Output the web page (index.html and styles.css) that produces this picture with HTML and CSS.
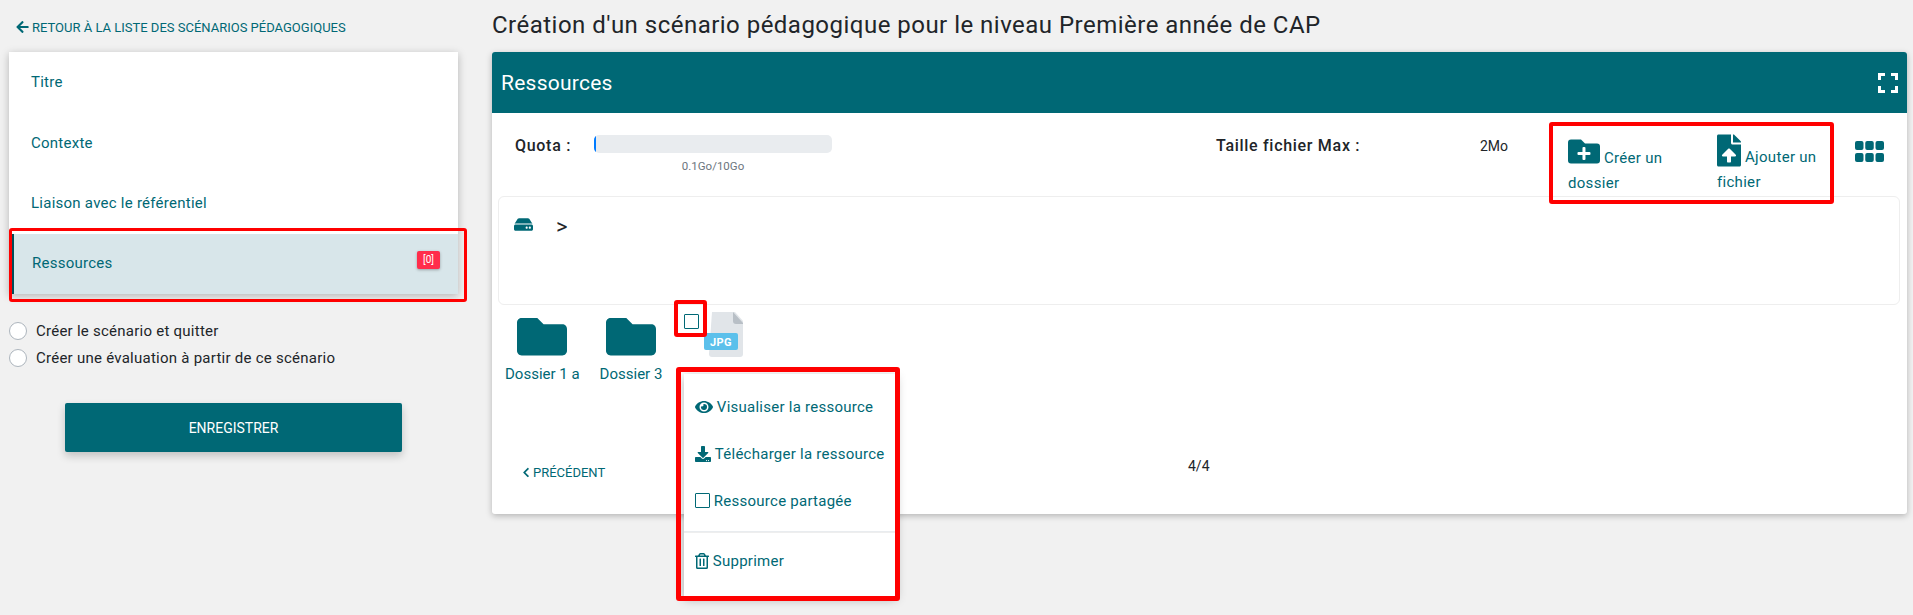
FILE: index.html
```html
<!DOCTYPE html>
<html lang="fr">
<head>
    <meta charset="UTF-8" />
    <title>Création d'un scénario pédagogique</title>
    <link rel="stylesheet" href="styles.css">
</head>
<body>
    <div class="page">
        <aside class="side">
            <a class="back">
                <svg class="ic-back" viewBox="0 0 448 512"><path d="M257.5 445.1l-22.2 22.2c-9.4 9.4-24.6 9.4-33.9 0L7 273c-9.4-9.4-9.4-24.6 0-33.9L201.4 44.7c9.4-9.4 24.6-9.4 33.9 0l22.2 22.2c9.5 9.5 9.3 25-.4 34.3L136.6 216H424c13.3 0 24 10.7 24 24v32c0 13.3-10.7 24-24 24H136.6l120.5 114.8c9.8 9.3 10 24.8.4 34.3z"/></svg>
                RETOUR À LA LISTE DES SCÉNARIOS PÉDAGOGIQUES
            </a>
            <ul class="steps">
                <li>Titre</li>
                <li>Contexte</li>
                <li>Liaison avec le référentiel</li>
                <li class="active">Ressources <span class="badge">[0]</span></li>
            </ul>
            <div class="radios">
                <label><span class="radio"></span>Créer le scénario et quitter</label>
                <label><span class="radio"></span>Créer une évaluation à partir de ce scénario</label>
            </div>
            <button class="save">ENREGISTRER</button>
        </aside>

        <main class="main">
            <h1>Création d'un scénario pédagogique pour le niveau Première année de CAP</h1>
            <section class="panel">
                <header class="panel-head">
                    <h2>Ressources</h2>
                    <svg class="ic-full" viewBox="0 0 20 20"><path d="M1.5 7V1.5H7M13 1.5h5.500V7M18.500 13v5.500H13M7 18.500H1.500V13"/></svg>
                </header>
                <div class="tools">
                    <b class="quota-label">Quota :</b>
                    <div class="quota">
                        <div class="bar"><div class="bar-fill"></div></div>
                        <small>0.1Go/10Go</small>
                    </div>
                    <b class="max-label">Taille fichier Max :</b>
                    <span class="max-val">2Mo</span>
                    <a class="action act-folder">
                        <svg class="ic-addfolder" viewBox="0 64 512 384"><path d="M464,128H272L208,64H48A48,48,0,0,0,0,112V400a48,48,0,0,0,48,48H464a48,48,0,0,0,48-48V176A48,48,0,0,0,464,128ZM359.500,296a16,16,0,0,1-16,16h-64v64a16,16,0,0,1-16,16h-16a16,16,0,0,1-16-16V312h-64a16,16,0,0,1-16-16V280a16,16,0,0,1,16-16h64V200a16,16,0,0,1,16-16h16a16,16,0,0,1,16,16v64h64a16,16,0,0,1,16,16Z"/></svg>
                        Créer un dossier
                    </a>
                    <a class="action act-file">
                        <svg class="ic-addfile" viewBox="0 0 384 512"><path d="M224 136V0H24C10.700 0 0 10.700 0 24v464c0 13.300 10.700 24 24 24h336c13.300 0 24-10.700 24-24V160H248c-13.200 0-24-10.800-24-24zm65.180 216.010H224v80c0 8.840-7.160 16-16 16h-32c-8.840 0-16-7.160-16-16v-80H94.820c-14.280 0-21.410-17.290-11.270-27.360l96.420-95.700c6.650-6.610 17.390-6.610 24.040 0l96.420 95.700c10.150 10.070 3.030 27.360-11.250 27.360zM377 105L279.100 7c-4.500-4.500-10.600-7-17-7H256v128h128v-6.100c0-6.300-2.500-12.400-7-16.900z"/></svg>
                        Ajouter un fichier
                    </a>
                    <svg class="ic-grid" viewBox="0 0 29 21">
                        <rect width="8.500" height="9" rx="2"/><rect x="10.250" width="8.500" height="9" rx="2"/><rect x="20.500" width="8.500" height="9" rx="2"/>
                        <rect y="12" width="8.500" height="9" rx="2"/><rect x="10.250" y="12" width="8.500" height="9" rx="2"/><rect x="20.500" y="12" width="8.500" height="9" rx="2"/>
                    </svg>
                </div>
                <div class="crumbs">
                    <svg class="ic-hdd" viewBox="0 64 576 384"><path d="M576 304v96c0 26.510-21.490 48-48 48H48c-26.510 0-48-21.490-48-48v-96c0-26.510 21.490-48 48-48h480c26.510 0 48 21.490 48 48zm-48-80a79.557 79.557 0 0 1 30.777 6.165L462.250 85.374A48.003 48.003 0 0 0 422.311 64H153.689a48 48 0 0 0-39.938 21.374L17.223 230.165A79.557 79.557 0 0 1 48 224h480zm-48 96c-17.673 0-32 14.327-32 32s14.327 32 32 32 32-14.327 32-32-14.327-32-32-32zm-96 0c-17.673 0-32 14.327-32 32s14.327 32 32 32 32-14.327 32-32-14.327-32-32-32z"/></svg>
                    <span class="sep">&gt;</span>
                </div>
                <div class="files">
                    <div class="folder">
                        <svg viewBox="0 64 512 384"><path d="M464 128H272l-64-64H48C21.490 64 0 85.490 0 112v288c0 26.510 21.490 48 48 48h416c26.510 0 48-21.490 48-48V176c0-26.510-21.490-48-48-48z"/></svg>
                        <span>Dossier 1 a</span>
                    </div>
                    <div class="folder">
                        <svg viewBox="0 64 512 384"><path d="M464 128H272l-64-64H48C21.490 64 0 85.490 0 112v288c0 26.510 21.490 48 48 48h416c26.510 0 48-21.490 48-48V176c0-26.510-21.490-48-48-48z"/></svg>
                        <span>Dossier 3</span>
                    </div>
                    <div class="file">
                        <span class="check"></span>
                        <svg class="ic-jpg" viewBox="0 0 39 45">
                            <path class="jpg-page" d="M8 0h23l8 9v33a3 3 0 0 1-3 3H8a3 3 0 0 1-3-3z"/>
                            <path class="jpg-fold" d="M29 0l10 11v1h-7a3 3 0 0 1-3-3z"/>
                            <rect class="jpg-tag" y="21" width="34" height="17" rx="2"/>
                            <text class="jpg-text" x="17" y="34" text-anchor="middle">JPG</text>
                        </svg>
                        <ul class="menu">
                            <li>
                                <svg class="ic-eye" viewBox="0 64 576 384"><path d="M572.520 241.400C518.290 135.590 410.930 64 288 64S57.680 135.640 3.480 241.410a32.350 32.350 0 0 0 0 29.190C57.710 376.410 165.070 448 288 448s230.320-71.640 284.520-177.410a32.350 32.350 0 0 0 0-29.190zM288 400a144 144 0 1 1 144-144 143.930 143.930 0 0 1-144 144zm0-240a95.310 95.310 0 0 0-25.310 3.790 47.850 47.850 0 0 1-66.900 66.900A95.780 95.780 0 1 0 288 160z"/></svg>
                                Visualiser la ressource
                            </li>
                            <li>
                                <svg class="ic-down" viewBox="0 0 512 512"><path d="M216 0h80c13.300 0 24 10.700 24 24v168h87.700c17.800 0 26.700 21.500 14.100 34.100L269.700 378.300c-7.500 7.500-19.800 7.500-27.300 0L90.100 226.100c-12.600-12.600-3.700-34.100 14.100-34.100H192V24c0-13.300 10.700-24 24-24zm296 376v112c0 13.300-10.700 24-24 24H24c-13.300 0-24-10.700-24-24V376c0-13.300 10.700-24 24-24h146.700l49 49c20.100 20.100 52.500 20.100 72.600 0l49-49H488c13.300 0 24 10.700 24 24zm-124 88c0-11-9-20-20-20s-20 9-20 20 9 20 20 20 20-9 20-20zm64 0c0-11-9-20-20-20s-20 9-20 20 9 20 20 20 20-9 20-20z"/></svg>
                                Télécharger la ressource
                            </li>
                            <li><span class="share-box"></span>Ressource partagée</li>
                            <li class="divider"></li>
                            <li>
                                <svg class="ic-trash" viewBox="0 0 448 512"><path d="M268 416h24a12 12 0 0 0 12-12V188a12 12 0 0 0-12-12h-24a12 12 0 0 0-12 12v216a12 12 0 0 0 12 12zM432 80h-82.410l-34-56.700A48 48 0 0 0 274.410 0H173.590a48 48 0 0 0-41.160 23.300L98.410 80H16A16 16 0 0 0 0 96v16a16 16 0 0 0 16 16h16v336a48 48 0 0 0 48 48h288a48 48 0 0 0 48-48V128h16a16 16 0 0 0 16-16V96a16 16 0 0 0-16-16zM171.840 50.910A6 6 0 0 1 177 48h94a6 6 0 0 1 5.150 2.910L293.610 80H154.390zM368 464H80V128h288zm-212-48h24a12 12 0 0 0 12-12V188a12 12 0 0 0-12-12h-24a12 12 0 0 0-12 12v216a12 12 0 0 0 12 12z"/></svg>
                                Supprimer
                            </li>
                        </ul>
                    </div>
                </div>
                <div class="pager">
                    <a class="prev">
                        <svg class="ic-prev" viewBox="0 0 320 512"><path d="M34.520 239.030L228.870 44.690c9.370-9.370 24.570-9.370 33.940 0l22.670 22.670c9.360 9.360 9.370 24.520.04 33.900L131.490 256l154.020 154.750c9.340 9.380 9.320 24.540-.04 33.900l-22.670 22.670c-9.370 9.370-24.570 9.370-33.940 0L34.520 272.970c-9.370-9.370-9.370-24.570 0-33.940z"/></svg>
                        PRÉCÉDENT
                    </a>
                    <span class="count">4/4</span>
                </div>
            </section>
        </main>
    </div>

    <!-- cadres rouges -->
    <div class="mark mark-step"></div>
    <div class="mark mark-actions"></div>
    <div class="mark mark-check"></div>
    <div class="mark mark-menu"></div>
</body>
</html>
```

FILE: styles.css
```css
* {
    margin: 0;
    padding: 0;
    box-sizing: border-box;
    list-style: none;
}
html, body {
    height: 615px;
    overflow: hidden;
}
body {
    background: #f1f1f1;
    color: #212529;
    font-family: Roboto, "Liberation Sans", sans-serif;
    font-size: 15px;
    letter-spacing: .25px;
    position: relative;
}
svg {
    fill: #006875;
}
.page {
    display: flex;
}

/* colonne gauche */
.side {
    width: 492px;
    flex: none;
    padding: 17px 0 0 9px;
}
.back {
    display: flex;
    align-items: center;
    gap: 3px;
    height: 20px;
    padding-left: 7px;
    color: #006875;
    font-size: 13px;
    letter-spacing: 0;
}
.ic-back {
    width: 13px;
    height: 14px;
}
.steps {
    width: 449px;
    margin-top: 15px;
    background: #fff;
    box-shadow: 0 2px 8px rgba(0, 0, 0, .25);
    color: #006875;
}
.steps li {
    height: 61px;
    display: flex;
    align-items: center;
    justify-content: space-between;
    padding: 0 18px 2px 22px;
}
.steps li:nth-child(3) {
    padding-bottom: 4px;
}
.steps .active {
    height: 60px;
    margin-top: -1px;
    padding-left: 18px;
    background: #d8e6ea;
    border-left: 5px solid #004f5a;
}
.badge {
    margin-top: -6px;
    padding: 1px 6px;
    height: 18px;
    background: #ff2d4b;
    border-radius: 2px;
    box-shadow: 0 1px 3px rgba(0, 0, 0, .3);
    color: #fff;
    font-size: 10px;
    line-height: 16px;
    letter-spacing: 0;
}
.radios {
    margin-top: 23px;
}
.radios label {
    display: flex;
    align-items: center;
    gap: 9px;
    height: 27px;
}
.radio {
    width: 18px;
    height: 18px;
    background: #fff;
    border: 1px solid #adb5bd;
    border-radius: 50%;
}
.save {
    display: block;
    width: 337px;
    height: 49px;
    margin: 32px 0 0 56px;
    background: #006875;
    border: 0;
    border-radius: 2px;
    box-shadow: 0 4px 8px rgba(0, 0, 0, .2);
    color: #fff;
    font: 14px Roboto, sans-serif;
}

/* colonne principale */
.main {
    width: 1415px;
    flex: none;
}
h1 {
    height: 52px;
    padding-top: 8px;
    font-size: 24px;
    font-weight: 400;
    line-height: 34px;
    letter-spacing: .48px;
}
.panel {
    height: 462px;
    background: #fff;
    border-radius: 3px;
    box-shadow: 0 2px 6px rgba(0, 0, 0, .25);
}
.panel-head {
    height: 61px;
    display: flex;
    align-items: center;
    justify-content: space-between;
    padding: 0 9px 0 9px;
    background: #006875;
    border-radius: 3px 3px 0 0;
}
h2 {
    color: #fff;
    font-size: 21px;
    font-weight: 400;
}
.ic-full {
    width: 20px;
    height: 20px;
    fill: none;
    stroke: #fff;
    stroke-width: 3;
}

.tools {
    height: 83px;
    display: flex;
    align-items: flex-start;
    padding-left: 23px;
}
.quota-label {
    width: 79px;
    margin-top: 23px;
    font-size: 16px;
    font-weight: 500;
    letter-spacing: .7px;
}
.quota {
    width: 238px;
    margin-top: 22px;
    text-align: center;
}
.bar {
    height: 18px;
    background: #e9ecef;
    border-radius: 5px;
    overflow: hidden;
}
.bar-fill {
    width: 2px;
    height: 100%;
    background: #007bff;
}
.quota small {
    display: block;
    margin-top: 6px;
    color: #6c757d;
    font-size: 11.500px;
    letter-spacing: 0;
}
.max-label {
    width: 264px;
    margin: 23px 0 0 384px;
    font-size: 16px;
    font-weight: 500;
    letter-spacing: .7px;
}
.max-val {
    width: 88px;
    margin-top: 25px;
    font-size: 14px;
    letter-spacing: 0;
}
.action {
    color: #006875;
    line-height: 25px;
    font-size: 15px;
    display: block;
    letter-spacing: .3px;
}
.act-folder {
    width: 149px;
    padding: 26px 30px 0 0;
}
.act-file {
    width: 138px;
    padding: 21px 28px 0 0;
}
.ic-addfolder {
    width: 32px;
    height: 25px;
    vertical-align: -1px;
}
.ic-addfile {
    width: 24px;
    height: 33px;
    vertical-align: -5px;
}
.ic-grid {
    width: 29px;
    height: 21px;
    margin-top: 28px;
}

.crumbs {
    height: 109px;
    margin: 0 7px 0 6px;
    padding: 21px 0 0 15px;
    display: flex;
    align-items: flex-start;
    border: 1px solid #eee;
    border-radius: 6px;
}
.ic-hdd {
    width: 19px;
    height: 13px;
}
.sep {
    margin: 0 0 0 23px;
    font-size: 22px;
    line-height: 17px;
}

.files {
    height: 150px;
    display: flex;
    padding-left: 13px;
}
.folder {
    display: flex;
    flex-direction: column;
    align-items: center;
    margin: 13px 20px 0 0;
    color: #006875;
    letter-spacing: 0;
}
.folder svg {
    width: 50px;
    height: 37.500px;
}
.folder span {
    margin-top: 9px;
}
.file {
    position: relative;
    display: flex;
    margin: 9px 0 0 1.500px;
    align-items: flex-start;
}
.check {
    width: 15px;
    height: 15px;
    background: #fff;
    border: 1.500px solid #006875;
    border-radius: 1px;
}
.ic-jpg {
    width: 39px;
    height: 45px;
    margin: -2px 0 0 5px;
}
.jpg-page {
    fill: #e1e5e9;
}
.jpg-fold {
    fill: #b8bfc6;
}
.jpg-tag {
    fill: #5bc0eb;
}
.jpg-text {
    fill: #fff;
    font: 700 11px Roboto, sans-serif;
    letter-spacing: .5px;
}

/* menu ouvert sur la ressource */
.menu {
    position: absolute;
    left: 0;
    top: 60px;
    width: 212px;
    height: 222px;
    padding-top: 9px;
    background: #fff;
    box-shadow: 0 3px 10px rgba(0, 0, 0, .3);
    color: #006875;
    z-index: 2;
    white-space: nowrap;
}
.menu li {
    height: 47px;
    display: flex;
    align-items: center;
    gap: 4px;
    padding-left: 11px;
}
.menu .divider {
    height: 1px;
    margin: 7px 0 5px;
    padding: 0;
    background: #e9ecef;
    box-shadow: 0 1px 0 #eee;
}
.ic-eye {
    width: 18px;
    height: 12px;
}
.ic-down {
    width: 16px;
    height: 16px;
}
.ic-trash {
    width: 14px;
    height: 16px;
}
.share-box {
    width: 15px;
    height: 15px;
    border: 1.500px solid #006875;
    border-radius: 1px;
}

.pager {
    display: flex;
    align-items: flex-start;
    padding-left: 30px;
}
.prev {
    display: flex;
    align-items: center;
    gap: 3px;
    width: 666px;
    margin-top: 10px;
    color: #006875;
    font-size: 13px;
    letter-spacing: 0;
}
.ic-prev {
    width: 8px;
    height: 11px;
}
.count {
    margin-top: 3px;
    font-size: 14px;
    letter-spacing: 0;
}

/* cadres rouges par-dessus la page */
.mark {
    position: absolute;
    border: 3px solid #f00;
    border-radius: 3px;
    z-index: 5;
}
.mark-step {
    left: 9px;
    top: 228px;
    width: 458px;
    height: 74px;
}
.mark-actions {
    left: 1549px;
    top: 122px;
    width: 285px;
    height: 82px;
    border-width: 4px;
}
.mark-check {
    left: 674px;
    top: 300px;
    width: 33px;
    height: 37px;
    border-width: 4px;
}
.mark-menu {
    left: 676px;
    top: 367px;
    width: 224px;
    height: 234px;
    border-width: 5px;
}
```
